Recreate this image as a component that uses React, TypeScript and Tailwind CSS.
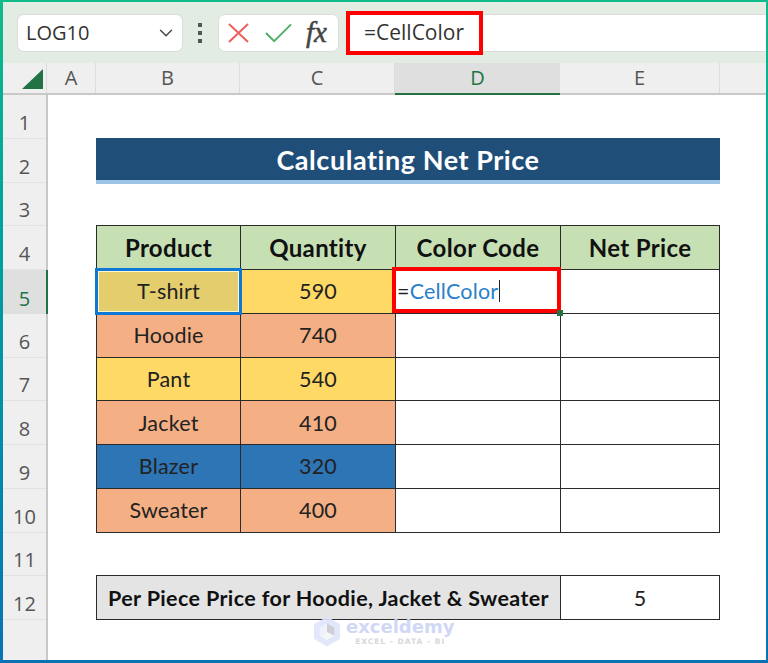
import React from 'react';
import { ChevronDown } from 'lucide-react';

// ---------------------------------------------------------------------------
// Sheet data
// ---------------------------------------------------------------------------

const columns = [
  { label: 'A', width: 'w-[49px]' },
  { label: 'B', width: 'w-[144px]' },
  { label: 'C', width: 'w-[155px]' },
  { label: 'D', width: 'w-[165px]', active: true },
  { label: 'E', width: 'w-[160px]' },
];

const rowNumbers = [1, 2, 3, 4, 5, 6, 7, 8, 9, 10, 11, 12];

const YELLOW = 'bg-[#ffd966]';
const ORANGE = 'bg-[#f4b084]';
const BLUE = 'bg-[#2e75b6]';

const products = [
  { name: 'Hoodie', qty: '740', fill: ORANGE },
  { name: 'Pant', qty: '540', fill: YELLOW },
  { name: 'Jacket', qty: '410', fill: ORANGE },
  { name: 'Blazer', qty: '320', fill: BLUE },
  { name: 'Sweater', qty: '400', fill: ORANGE },
];

const cellBase =
  'flex items-center justify-center border border-[#2a2a2a] -mt-px -ml-px min-w-0';

// ---------------------------------------------------------------------------
// Formula bar
// ---------------------------------------------------------------------------

function FormulaBar() {
  return (
    <div className="flex h-[61px] items-center bg-[#e3ece3] pl-[14px] font-['Open_Sans',sans-serif] text-[#3a3a3a]">
      <div className="flex h-[38px] w-[166px] items-center justify-between rounded-[7px] border border-[#dcdcdc] bg-white pl-[8px] pr-[5px]">
        <span className="text-[20px] text-[#333]">LOG10</span>
        <ChevronDown className="h-[22px] w-[22px] text-[#444]" strokeWidth={1.5} />
      </div>
      <div className="ml-[15px] flex w-[5px] flex-col gap-[4px]">
        <span className="h-[4px] w-[4px] bg-[#555]" />
        <span className="h-[4px] w-[4px] bg-[#555]" />
        <span className="h-[4px] w-[4px] bg-[#555]" />
      </div>
      <div className="ml-[15px] flex h-[38px] w-[121px] items-center rounded-[7px] border border-[#dcdcdc] bg-white pl-[9px]">
        <svg width="21" height="20" viewBox="0 0 21 20" fill="none" stroke="#ee5f5f" strokeWidth="2">
          <path d="M1 1 L20 19 M20 1 L1 19" />
        </svg>
        <svg className="ml-[16px]" width="27" height="20" viewBox="0 0 28 20" fill="none" stroke="#4caf64" strokeWidth="2">
          <path d="M1 10 L9.5 18.5 L27 1" />
        </svg>
        <span className="ml-[14px] font-['Liberation_Serif',serif] text-[29px] italic leading-none text-[#444] [-webkit-text-stroke:0.5px_#444]">
          fx
        </span>
      </div>
      <div className="relative ml-[7px] flex h-[38px] flex-1 items-center border-y border-[#dcdcdc] bg-white pl-[18px]">
        <span className="text-[21px] text-[#333]">=CellColor</span>
        <div className="absolute left-0 top-[-4px] h-[44px] w-[137px] border-[4px] border-[#ff0000]" />
      </div>
    </div>
  );
}

// ---------------------------------------------------------------------------
// Headers
// ---------------------------------------------------------------------------

function ColumnHeaders() {
  return (
    <div className="flex h-[32px] border-b-2 border-[#c8c8c8] bg-[#efefef] font-['Open_Sans',sans-serif] text-[20px] text-[#555]">
      <div className="flex w-[44px] items-end justify-end border-r border-[#dcdcdc] pb-[3px] pr-[2px]">
        <svg width="22" height="22" viewBox="0 0 22 22">
          <path d="M0 21 L21 1 V21 Z" fill="#217346" />
        </svg>
      </div>
      {columns.map((col) => (
        <div
          key={col.label}
          className={
            col.active
              ? `${col.width} -mb-[2px] flex items-center justify-center border-b-2 border-[#217346] bg-[#dfdfdf] text-[#217346]`
              : `${col.width} flex items-center justify-center border-r border-[#dcdcdc]`
          }
        >
          {col.label}
        </div>
      ))}
    </div>
  );
}

function RowHeaders() {
  return (
    <div className="flex w-[45px] shrink-0 flex-col border-r-2 border-[#c8c8c8] bg-[#efefef] font-['Open_Sans',sans-serif] text-[20px] text-[#555]">
      {rowNumbers.map((n) => (
        <div
          key={n}
          className={
            n === 5
              ? 'relative -mr-[2px] flex h-[43.75px] items-end justify-center border-r-2 border-[#217346] bg-[#dfdfdf] text-[#217346]'
              : 'flex h-[43.75px] items-end justify-center border-b border-[#e2e2e2]'
          }
        >
          {n}
        </div>
      ))}
    </div>
  );
}

// ---------------------------------------------------------------------------
// Worksheet body
// ---------------------------------------------------------------------------

function Sheet() {
  return (
    <div className="relative flex-1 bg-white font-['Lato',sans-serif] text-[21.5px] tracking-[0.2px] text-[#222]">
      <div className="grid grid-cols-[49px_144px_155px_165px_159px] grid-rows-[repeat(12,43.75px)]">
        {/* Title */}
        <div className="col-start-2 col-span-4 row-start-2 -ml-px -mt-px -mb-[1px] flex items-center justify-center border-b-[4px] border-[#9dc3e6] bg-[#1f4e79] pt-[4px] text-[27px] font-bold tracking-[0.55px] text-white">
          Calculating Net Price
        </div>

        {/* Table header */}
        {['Product', 'Quantity', 'Color Code', 'Net Price'].map((h, i) => (
          <div
            key={h}
            className={`${cellBase} row-start-4 bg-[#c6e0b4] text-[24px] font-bold tracking-[0.35px] text-[#111] ${
              ['col-start-2', 'col-start-3', 'col-start-4', 'col-start-5'][i]
            }`}
          >
            {h}
          </div>
        ))}

        {/* Row 5, the one being edited */}
        <div className={`${cellBase} relative col-start-2 row-start-5 bg-[#e4cd6c]`}>
          T-shirt
          <div className="absolute -inset-[2px] border-[3px] border-[#0f78d4] outline outline-1 -outline-offset-[4px] outline-[#fff6cc]" />
        </div>
        <div className={`${cellBase} col-start-3 row-start-5 ${YELLOW}`}>590</div>
        <div className={`${cellBase} relative col-start-4 row-start-5 !justify-start bg-white pl-[1px]`}>
          <span className="text-[#222]">=</span>
          <span className="text-[#2a80c8]">CellColor</span>
          <span className="ml-[1px] h-[22px] w-[1px] bg-[#222]" />
          <div className="absolute -left-[4px] -top-[3px] h-[46px] w-[169px] border-[4px] border-[#ff0000]" />
          <div className="absolute -bottom-[3px] -right-[3px] h-[6px] w-[6px] bg-[#217346]" />
        </div>
        <div className={`${cellBase} col-start-5 row-start-5 bg-white`} />

        {/* Rows 6 to 10 */}
        {products.map((p, i) => {
          const row = ['row-start-6', 'row-start-7', 'row-start-8', 'row-start-9', 'row-start-10'][i];
          return (
            <React.Fragment key={p.name}>
              <div className={`${cellBase} col-start-2 ${row} ${p.fill}`}>{p.name}</div>
              <div className={`${cellBase} col-start-3 ${row} ${p.fill}`}>{p.qty}</div>
              <div className={`${cellBase} col-start-4 ${row} bg-white`} />
              <div className={`${cellBase} col-start-5 ${row} bg-white`} />
            </React.Fragment>
          );
        })}

        {/* Row 12 */}
        <div className={`${cellBase} col-start-2 col-span-3 row-start-12 bg-[#e4e4e4] text-[21.5px] font-bold tracking-[0.37px] text-[#111]`}>
          Per Piece Price for Hoodie, Jacket &amp; Sweater
        </div>
        <div className={`${cellBase} col-start-5 row-start-12 bg-white`}>5</div>
      </div>

      {/* Watermark */}
      <div className="absolute left-[265px] top-[521px] flex items-center gap-[5px] opacity-90">
        <svg width="28" height="31" viewBox="0 0 29 31">
          <path d="M14.5 0 L28 8 V23 L14.5 31 L1 23 V8 Z" fill="#dfe5fb" />
          <path d="M14.5 7 L22 11.5 V20 L14.5 16 Z" fill="#c9c9cf" />
          <path d="M14.5 7 L7 11.5 V20 L14.5 16 Z" fill="#eef0fb" />
          <path d="M7 20 L14.5 16 L22 20 L14.5 24.5 Z" fill="#f1f7f7" />
        </svg>
        <div className="flex flex-col items-center leading-none">
          <span className="font-['DejaVu_Sans',sans-serif] text-[18px] font-bold leading-[19px] tracking-normal text-[#cdd4f5]">
            exceldemy
          </span>
          <span className="mt-[2px] font-['DejaVu_Sans',sans-serif] text-[7.5px] font-bold tracking-[1px] text-[#d4d4d4]">
            EXCEL - DATA - BI
          </span>
        </div>
      </div>
    </div>
  );
}

// ---------------------------------------------------------------------------
// App
// ---------------------------------------------------------------------------

export default function App() {
  return (
    <div className="h-[663px] w-[768px] overflow-hidden bg-gradient-to-b from-[#10bb8a] to-[#0a72b4] p-[2px] pb-[3px] pl-[3px]">
      <div className="flex h-full flex-col overflow-hidden bg-white">
        <FormulaBar />
        <ColumnHeaders />
        <div className="flex flex-1">
          <RowHeaders />
          <Sheet />
        </div>
      </div>
    </div>
  );
}
